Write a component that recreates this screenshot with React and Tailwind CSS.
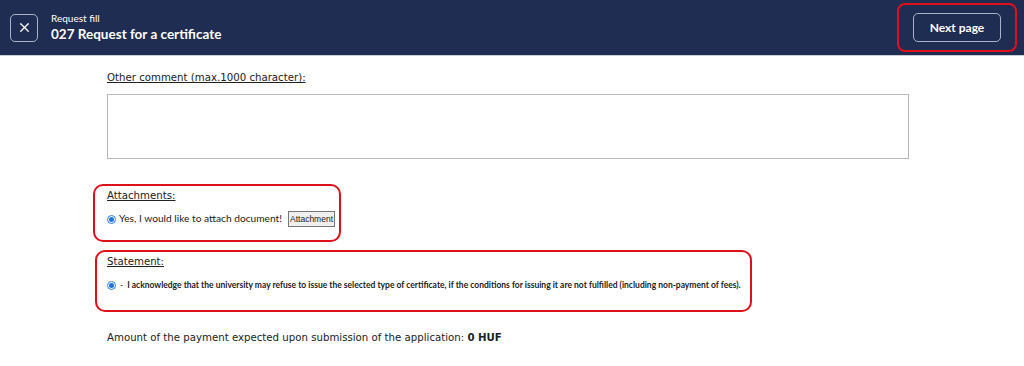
import { X } from "lucide-react";

function Radio() {
  return (
    <span className="inline-flex h-[9px] w-[9px] shrink-0 items-center justify-center rounded-full border border-[#2f7fd8] bg-white">
      <span className="h-[5px] w-[5px] rounded-full bg-[#1a73e8]" />
    </span>
  );
}

export default function App() {
  return (
    <div className="h-[366px] w-[1024px] bg-white font-['DejaVu_Sans',sans-serif] text-[#222]">
      {/* Header */}
      <header className="flex h-[56px] items-center justify-between border-b border-[#c9ccd6] bg-[#1f2d52] pl-[10px] pr-[7px] font-['Lato',sans-serif] text-white">
        <div className="flex items-center gap-[13px]">
          <button className="flex h-[28px] w-[28px] items-center justify-center rounded-[5px] border border-[#aab2c8]">
            <X size={15} strokeWidth={2} />
          </button>
          <div className="leading-none">
            <div className="text-[10px]">Request fill</div>
            <div className="mt-[5px] text-[13.5px] font-bold">027 Request for a certificate</div>
          </div>
        </div>
        <div className="flex h-[49px] w-[120px] items-center justify-center rounded-[8px] border-2 border-[#e0101a]">
          <button className="h-[29px] w-[88px] rounded-[5px] border border-[#aab2c8] text-[12px] font-bold">
            Next page
          </button>
        </div>
      </header>

      {/* Body */}
      <main className="pl-[107px] pr-[115px] text-[10.2px]">
        <div className="pt-[14px] underline leading-[16px]">Other comment (max.1000 character):</div>
        <textarea className="mt-[8px] block h-[65px] w-[802px] resize-none border border-[#b8b8b8]" />

        <div className="ml-[-14px] mt-[25px] w-[248px] rounded-[10px] border-2 border-[#e0101a] pb-[13px] pl-[12px] pt-[2px]">
          <div className="underline leading-[16px]">Attachments:</div>
          <div className="mt-[7px] flex items-center gap-[3px] whitespace-nowrap font-['Lato',sans-serif] text-[10.2px]">
            <Radio />
            <span>Yes, I would like to attach document!</span>
            <button className="ml-[3px] border border-[#777] bg-[#efefef] px-[1px] font-['Liberation_Sans',sans-serif] text-[8.5px] leading-[14px]">
              Attachment
            </button>
          </div>
        </div>

        <div className="ml-[-12px] mt-[8px] w-[657px] rounded-[10px] border-2 border-[#e0101a] pb-[18px] pl-[10px] pt-[2px]">
          <div className="underline leading-[16px]">Statement:</div>
          <div className="mt-[9px] flex items-center gap-[4px] whitespace-nowrap font-['Lato',sans-serif] text-[8.5px] font-bold">
            <Radio />
            <span className="font-normal">-</span>
            <span>
              I acknowledge that the university may refuse to issue the selected type of certificate, if the conditions for issuing it are not fulfilled (including non-payment of fees).
            </span>
          </div>
        </div>

        <div className="mt-[18px] leading-[16px]">
          Amount of the payment expected upon submission of the application: <b>0 HUF</b>
        </div>
      </main>
    </div>
  );
}
